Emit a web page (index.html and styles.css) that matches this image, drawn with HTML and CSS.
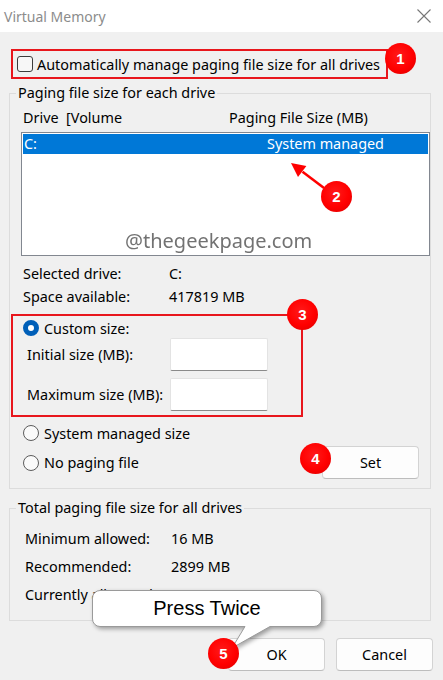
FILE: index.html
```html
<!DOCTYPE html>
<html>
<head>
<meta charset="utf-8">
<title>Virtual Memory</title>
<link rel="stylesheet" href="styles.css">
</head>
<body>
<div class="window">
  <div class="titlebar">
    <span class="title">Virtual Memory</span>
    <svg class="close" viewBox="0 0 14 14"><path d="M0.5 0.5L13.5 13.5M13.5 0.5L0.5 13.5"/></svg>
  </div>

  <div class="auto-box">
    <span class="checkbox"></span>
    <span>Automatically manage paging file size for all drives</span>
  </div>

  <fieldset class="group group-drives">
    <legend>Paging file size for each drive</legend>
    <div class="col-heads"><span class="head-drive">Drive&nbsp; [Volume</span><span>Paging File Size (MB)</span></div>
    <div class="listbox">
      <div class="list-row selected"><span class="cell-drive">C:</span><span>System managed</span></div>
      <span class="watermark">@thegeekpage.com</span>
    </div>
    <div class="info-row first"><span class="info-label">Selected drive:</span><span>C:</span></div>
    <div class="info-row"><span class="info-label">Space available:</span><span>417819 MB</span></div>

    <div class="custom-box">
      <div class="radio-row inbox"><span class="radio checked"></span>Custom size:</div>
      <div class="size-row"><span class="size-label">Initial size (MB):</span><span class="textbox"></span></div>
      <div class="size-row second"><span class="size-label">Maximum size (MB):</span><span class="textbox"></span></div>
    </div>

    <div class="radio-row standalone"><span class="radio"></span>System managed size</div>
    <div class="set-row">
      <div class="radio-row"><span class="radio"></span>No paging file</div>
      <button class="btn btn-set">Set</button>
    </div>
  </fieldset>

  <fieldset class="group group-total">
    <legend>Total paging file size for all drives</legend>
    <div class="total-row first"><span class="total-label">Minimum allowed:</span><span>16 MB</span></div>
    <div class="total-row"><span class="total-label">Recommended:</span><span>2899 MB</span></div>
    <div class="total-row"><span class="total-label">Currently allocated:</span><span>2432 MB</span></div>
  </fieldset>

  <div class="button-row">
    <button class="btn">OK</button>
    <button class="btn">Cancel</button>
  </div>

  <svg class="arrow" viewBox="0 0 45 35">
    <line x1="39" y1="30" x2="17.5" y2="13.7"/>
    <polygon points="6,5 21.4,7.9 13,19.1"/>
  </svg>

  <div class="callout">
    <svg class="callout-shape" viewBox="0 0 230 60">
      <path d="M8,0.5 H222 A7.5,7.5 0 0 1 229.5,8 V29 A7.5,7.5 0 0 1 222,36.5 H178 L140,58 L153,36.5 H8 A7.5,7.5 0 0 1 0.5,29 V8 A7.5,7.5 0 0 1 8,0.5 Z"/>
    </svg>
    <span class="callout-text">Press Twice</span>
  </div>

  <span class="badge b1">1</span>
  <span class="badge b2">2</span>
  <span class="badge b3">3</span>
  <span class="badge b4">4</span>
  <span class="badge b5">5</span>
</div>
</body>
</html>
```

FILE: styles.css
```css
* { box-sizing: border-box; }
html, body { margin: 0; padding: 0; }
body {
  width: 443px;
  height: 680px;
  overflow: hidden;
  background: #f0f0f0;
  font-family: "Noto Sans", "DejaVu Sans", sans-serif;
  font-size: 14.4px;
  color: #000;
}
.window {
  position: relative;
  width: 443px;
  height: 680px;
  background: #f0f0f0;
  overflow: hidden;
}
.titlebar {
  height: 32px;
  background: #fff;
  display: flex;
  align-items: center;
  justify-content: space-between;
  padding: 0 12px 0 4px;
}
.title { color: #8c8c8c; font-size: 14px; }
.close { width: 14px; height: 14px; stroke: #777; stroke-width: 1.1; fill: none; }

.auto-box {
  margin: 17px 0 0 11px;
  width: 377px;
  height: 30px;
  border: 2px solid #e8161c;
  display: flex;
  align-items: center;
  gap: 4px;
  padding-left: 4px;
}
.checkbox {
  width: 16px;
  height: 16px;
  border: 1px solid #3c3c3c;
  border-radius: 3px;
  background: #f7f7f7;
  flex: none;
}

.group {
  margin: 4px 0 0 9px;
  width: 422px;
  border: 1px solid #dcdcdc;
  padding: 0;
  min-width: 0;
}
.group legend {
  margin-left: 6px;
  padding: 0 2px;
  line-height: 20px;
}
.group-drives { padding-bottom: 9px; }
.col-heads {
  margin: 5px 0 0 13px;
  height: 20px;
  line-height: 20px;
  display: flex;
}
.head-drive { width: 206px; }
.listbox {
  position: relative;
  margin: 4px 0 0 11px;
  width: 409px;
  height: 124px;
  border: 1px solid #828790;
  background: #fff;
  padding: 1px;
}
.list-row {
  height: 20px;
  line-height: 20px;
  display: flex;
  padding-left: 1px;
}
.list-row.selected { background: #0078d7; color: #fff; }
.cell-drive { width: 243px; }
.watermark {
  position: absolute;
  left: 103px;
  top: 96px;
  font-size: 20px;
  line-height: 24px;
  color: #5a5a5a;
  opacity: 0.85;
}
.info-row {
  margin-left: 13px;
  height: 23px;
  display: flex;
  align-items: center;
}
.info-row.first { margin-top: 6px; }
.info-label { width: 146px; }

.custom-box {
  margin: 6px 0 0 1px;
  width: 292px;
  height: 103px;
  border: 2px solid #e8161c;
}
.radio-row {
  height: 20px;
  display: flex;
  align-items: center;
  gap: 5px;
}
.radio-row.inbox { margin-top: 2px; padding-left: 10px; }
.radio-row.standalone { margin: 6px 0 0 13px; }
.radio {
  width: 16px;
  height: 16px;
  border-radius: 50%;
  border: 1px solid #5c5c5c;
  background: #fafafa;
  flex: none;
}
.radio.checked {
  border: 5px solid #005fb8;
  background: #fff;
}
.size-row {
  height: 33px;
  display: flex;
  align-items: center;
  padding-left: 14px;
}
.size-row.second { margin-top: 7px; }
.size-label { width: 143px; }
.textbox {
  width: 98px;
  height: 33px;
  background: #fff;
  border: 1px solid #e3e3e3;
  border-bottom-color: #8a8a8a;
  border-radius: 2px;
}
.set-row {
  margin: 3px 0 0 13px;
  height: 33px;
  display: flex;
  align-items: center;
}
.btn {
  width: 97px;
  height: 33px;
  border: 1px solid #d3d3d3;
  border-bottom-color: #bdbdbd;
  border-radius: 4px;
  background: #fdfdfd;
  font: inherit;
  color: #000;
  padding: 0;
}
.btn-set { margin-left: auto; margin-right: 11px; }

.group-total { margin-top: 9px; padding-bottom: 12px; }
.total-row {
  height: 28px;
  display: flex;
  align-items: center;
  padding-left: 15px;
}
.total-row.first { margin-top: 6px; }
.total-label { width: 146px; }

.button-row {
  margin-top: 17px;
  display: flex;
  justify-content: flex-end;
  gap: 11px;
  padding-right: 10px;
}

.arrow {
  position: absolute;
  left: 285px;
  top: 158px;
  width: 45px;
  height: 35px;
}
.arrow line { stroke: #f00; stroke-width: 2.5; }
.arrow polygon { fill: #f00; }

.callout {
  position: absolute;
  left: 92px;
  top: 590px;
  width: 230px;
  height: 37px;
  display: flex;
  align-items: center;
  justify-content: center;
}
.callout-shape {
  position: absolute;
  left: 0;
  top: 0;
  width: 230px;
  height: 60px;
  overflow: visible;
  filter: drop-shadow(2px 2px 2px rgba(0,0,0,0.35));
}
.callout-shape path { fill: #fff; stroke: #9a9a9a; stroke-width: 1; }
.callout-text {
  position: relative;
  font-family: "Liberation Sans", Arial, sans-serif;
  font-size: 20px;
  color: #000;
}

.badge {
  position: absolute;
  width: 31px;
  height: 31px;
  border-radius: 50%;
  background: radial-gradient(circle at 45% 40%, #ff1a1a 0%, #f00 55%, #d80000 100%);
  color: #fff;
  font-family: "Liberation Sans", Arial, sans-serif;
  font-weight: bold;
  font-size: 15px;
  display: flex;
  align-items: center;
  justify-content: center;
}
.b1 { left: 385px; top: 43px; }
.b2 { left: 321px; top: 181px; }
.b3 { left: 287px; top: 299px; }
.b4 { left: 300px; top: 443px; }
.b5 { left: 208px; top: 638px; }
```
